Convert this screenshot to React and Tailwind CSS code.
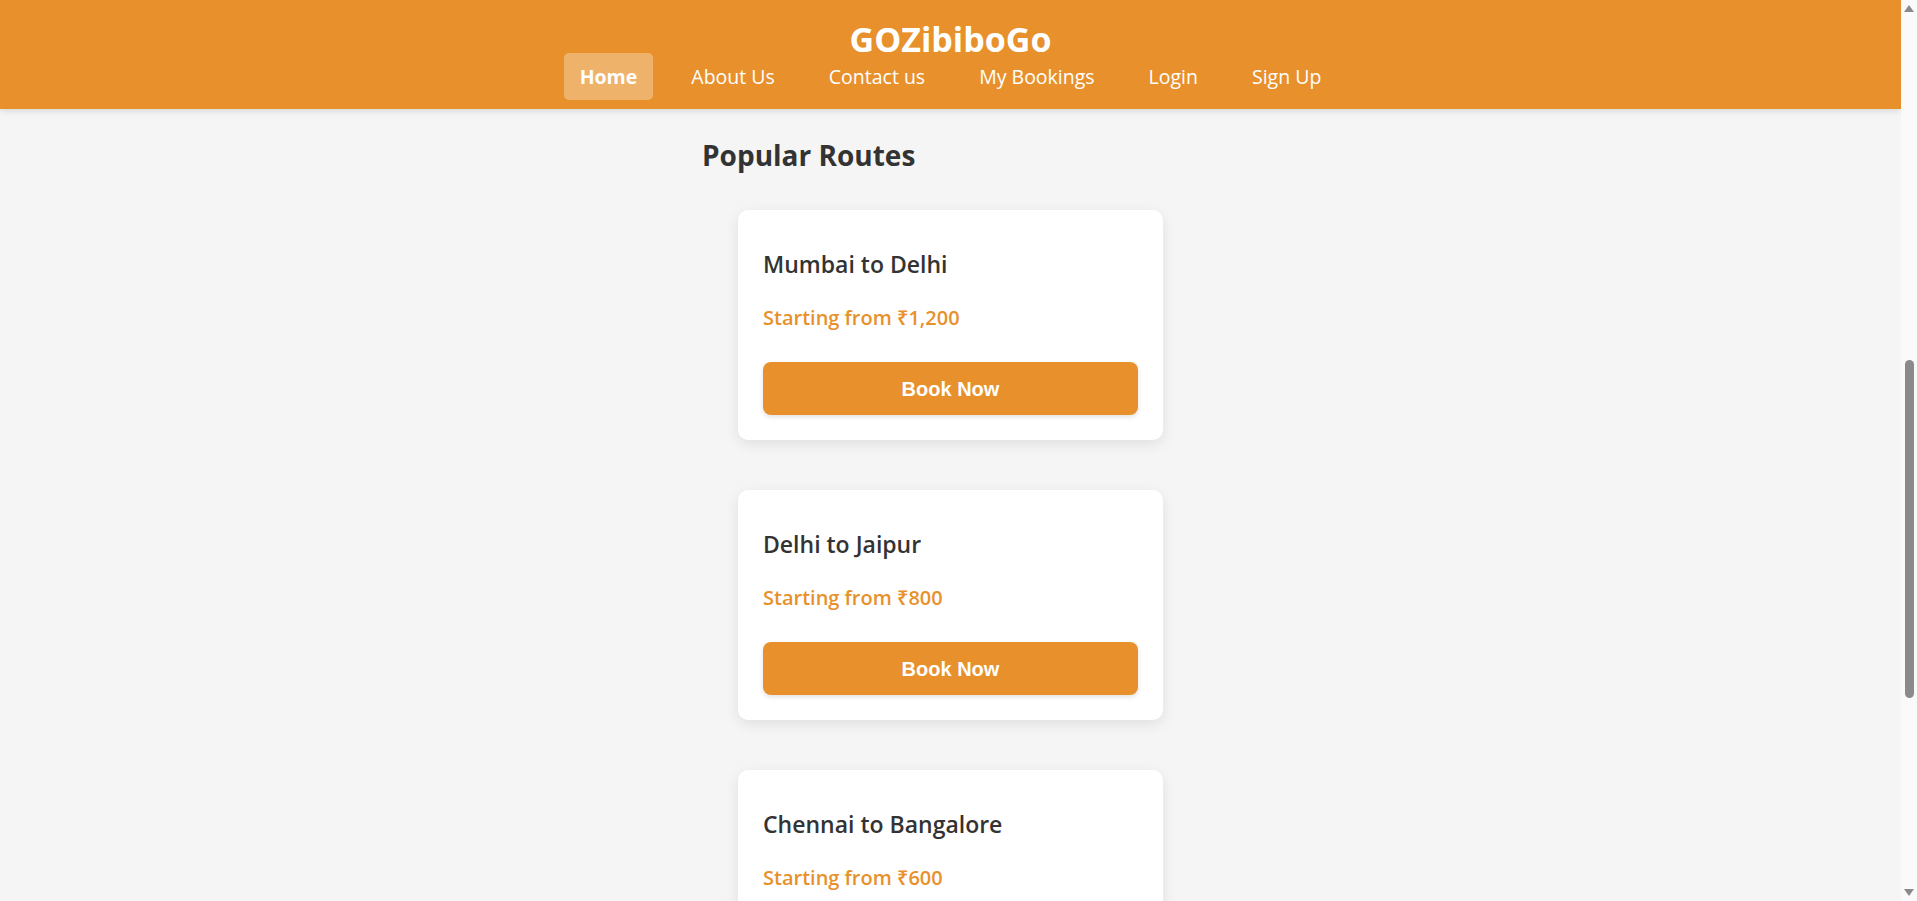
import React from 'react';

const routes = [
  { from: 'Mumbai', to: 'Delhi', price: '1,200' },
  { from: 'Delhi', to: 'Jaipur', price: '800' },
  { from: 'Chennai', to: 'Bangalore', price: '600' },
];

const links = ['Home', 'About Us', 'Contact us', 'My Bookings', 'Login', 'Sign Up'];

function Header() {
  return (
    <header className="relative z-10 shrink-0 bg-[#e8912c] pt-[25px] pb-[9px] text-white shadow-[0_2px_6px_rgba(0,0,0,0.12)]">
      <h1 className="text-center text-[34px] font-bold leading-[28px]">GOZibiboGo</h1>
      <nav className="flex justify-center gap-[22px]">
        {links.map((label, i) => (
          <a
            key={label}
            href="#"
            className={`rounded-[5px] px-4 py-[10px] text-[19.5px] leading-[27px] ${
              i === 0 ? 'bg-white/30 font-bold' : 'font-normal'
            }`}
          >
            {label}
          </a>
        ))}
      </nav>
    </header>
  );
}

function RouteCard({ from, to, price }) {
  return (
    <div className="mx-auto w-[425px] shrink-0 rounded-[10px] bg-white p-[25px] shadow-[0_4px_14px_rgba(0,0,0,0.09)]">
      <h3 className="mt-[14px] text-[23px] font-semibold leading-[31px] text-[#333]">
        {from} to {to}
      </h3>
      <p className="mt-[24px] text-[20px] font-semibold leading-[27px] text-[#e8912c]">
        Starting from ₹{price}
      </p>
      <button
        className="mt-[31px] h-[53px] w-full rounded-[8px] bg-[#e8912c] text-[20px] font-bold text-white shadow-[0_2px_5px_rgba(0,0,0,0.12)]"
        style={{ fontFamily: '"Liberation Sans", Arial, sans-serif' }}
      >
        Book Now
      </button>
    </div>
  );
}

// Browser-style vertical scrollbar
function Scrollbar() {
  return (
    <div className="flex w-[16px] shrink-0 flex-col bg-[#fafafa]">
      <div className="flex h-[17px] items-center justify-center">
        <svg width="10" height="7" viewBox="0 0 10 7">
          <path d="M5 0L10 7H0z" fill="#8a8a8a" />
        </svg>
      </div>
      <div className="flex-1">
        <div className="mx-auto mt-[343px] h-[338px] w-[9px] rounded-full bg-[#8a8a8a]" />
      </div>
      <div className="flex h-[17px] items-center justify-center">
        <svg width="10" height="7" viewBox="0 0 10 7">
          <path d="M0 0H10L5 7z" fill="#8a8a8a" />
        </svg>
      </div>
    </div>
  );
}

export default function App() {
  return (
    <div
      className="flex h-screen overflow-hidden bg-[#f5f5f5] text-[#333]"
      style={{ fontFamily: '"Open Sans", "Noto Sans", sans-serif' }}
    >
      <div className="flex min-w-0 flex-1 flex-col overflow-hidden">
        <Header />

        {/* Popular routes */}
        <section className="mx-auto w-[497px]">
          <h2 className="mt-[27px] text-[28px] font-bold leading-[38px] text-[#333]">Popular Routes</h2>
          <div className="mt-[36px] flex flex-col gap-[50px]">
            {routes.map((r) => (
              <RouteCard key={r.from + r.to} {...r} />
            ))}
          </div>
        </section>
      </div>
      <Scrollbar />
    </div>
  );
}
